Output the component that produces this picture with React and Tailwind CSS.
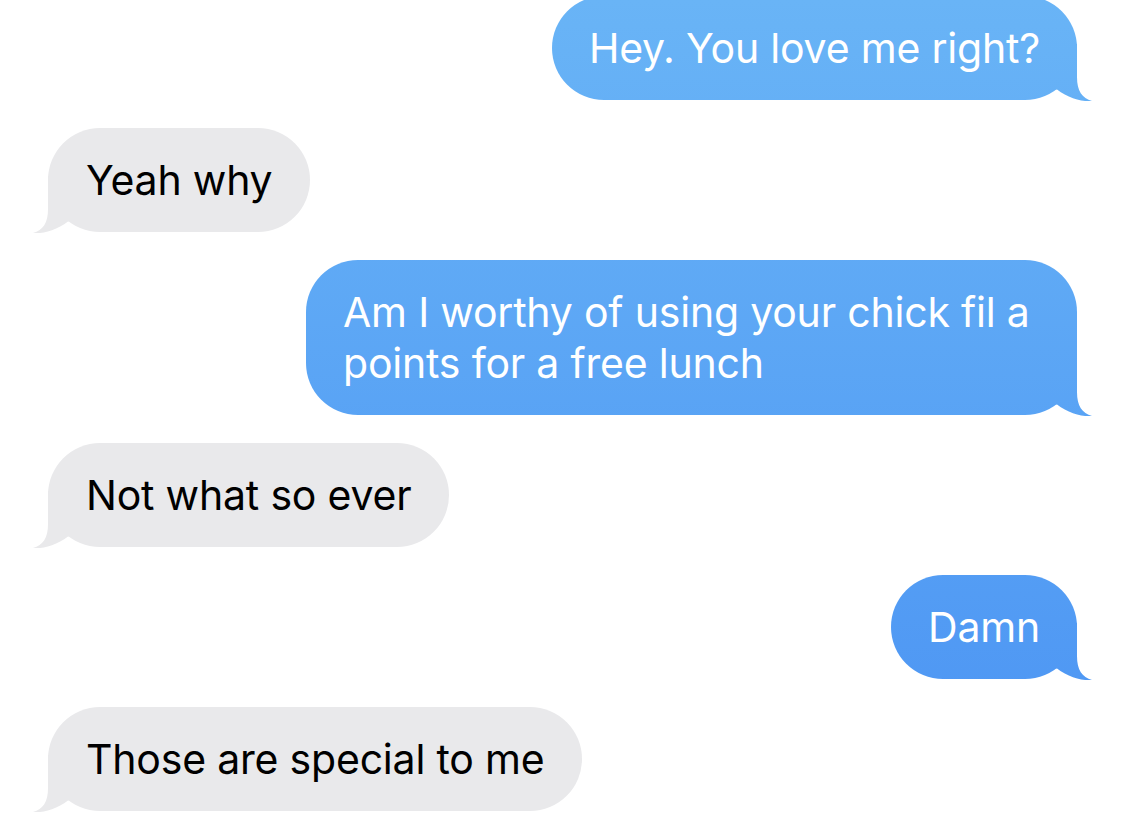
import React from 'react';

const messages = [
  { id: 1, from: 'me', lines: ['Hey. You love me right?'] },
  { id: 2, from: 'them', lines: ['Yeah why'] },
  { id: 3, from: 'me', lines: ['Am I worthy of using your chick fil a', 'points for a free lunch'], wide: true },
  { id: 4, from: 'them', lines: ['Not what so ever'] },
  { id: 5, from: 'me', lines: ['Damn'] },
  { id: 6, from: 'them', lines: ['Those are special to me'] }
];

// bubble tail, cut out of a box with clip-path so it shares the bubble's fixed gradient
const Tail = ({ mine }) => (
  <div
    className={
      mine
        ? 'absolute -bottom-px -right-4 w-[68px] h-[57px] bg-linear-to-b from-[#69b4f6] to-[#4b93f3] bg-fixed [clip-path:path("M0_0_L52_0_L52_33_C52_47_57_54_67_57_C57_58_43_54_32_45.5_L0_45.5_Z")]'
        : 'absolute -bottom-px -left-4 w-[68px] h-[57px] bg-[#e9e9eb] -scale-x-100 [clip-path:path("M0_0_L52_0_L52_33_C52_47_57_54_67_57_C57_58_43_54_32_45.5_L0_45.5_Z")]'
    }
  />
);

const Bubble = ({ msg }) => {
  const mine = msg.from === 'me';
  return (
    <div className={mine ? 'flex justify-end' : 'flex justify-start'}>
      <div
        className={
          mine
            ? `relative rounded-[52px] px-[37px] py-[26.5px] text-white bg-linear-to-b from-[#69b4f6] to-[#4b93f3] bg-fixed ${msg.wide ? 'w-[771px]' : ''}`
            : 'relative rounded-[52px] px-[38px] py-[26.5px] text-black bg-[#e9e9eb]'
        }
      >
        <Tail mine={mine} />
        <p className="relative text-[41px] leading-[51px] tracking-[-0.2px] whitespace-nowrap">
          {msg.lines.map((line, i) => (
            <React.Fragment key={i}>
              {i > 0 && <br />}
              {line}
            </React.Fragment>
          ))}
        </p>
      </div>
    </div>
  );
};

export default function App() {
  return (
    <div className="w-[1125px] h-[814px] overflow-hidden bg-white font-['Inter','Liberation_Sans',sans-serif]">
      <div className="flex flex-col gap-[28px] px-12 -mt-1">
        {messages.map((msg) => (
          <Bubble key={msg.id} msg={msg} />
        ))}
      </div>
    </div>
  );
}
